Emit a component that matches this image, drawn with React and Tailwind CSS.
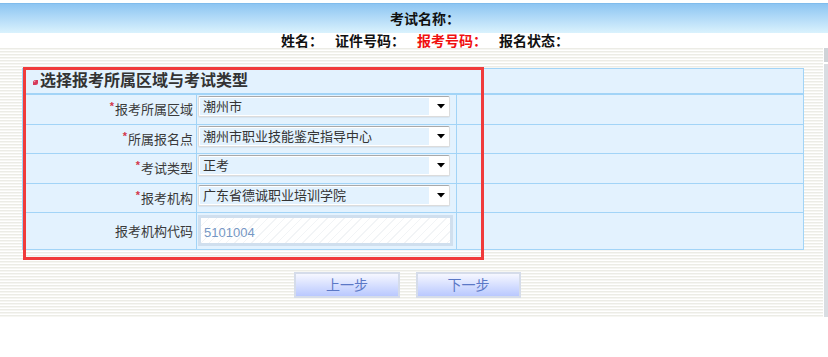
import React from 'react';

const rows = [
  { label: '报考所属区域', required: true, value: '潮州市', h: 'h-[30px]' },
  { label: '所属报名点', required: true, value: '潮州市职业技能鉴定指导中心', h: 'h-[29px]' },
  { label: '考试类型', required: true, value: '正考', h: 'h-[30px]' },
  { label: '报考机构', required: true, value: '广东省德诚职业培训学院', h: 'h-[29px]' },
];

function Select({ value }) {
  return (
    <div className="ml-[1px] mt-[1px] flex h-[21px] w-[252px] items-center rounded-[2px] border border-[#dcdcdc] border-t-[#a9a9a9] bg-white shadow-[0_1px_1px_rgba(0,0,0,0.06)]">
      <div className="ml-[1px] flex h-[17px] w-[229px] items-center bg-[#e3f2fe] pl-[3px] text-[13px] leading-none text-[#333]">
        {value}
      </div>
      <svg width="8" height="5" viewBox="0 0 8 5" className="ml-[8px]">
        <polygon points="0,0 8,0 4,4.5" fill="#000" />
      </svg>
    </div>
  );
}

function Label({ text, required }) {
  return (
    <div className="flex h-full w-[174px] items-center justify-end border-r border-[#a2d4f7] pr-[3px] text-[13px] leading-none text-[#3a3a3a]">
      {required && <span className="mr-[1px] -mt-[6px] text-[11px] font-bold text-[#d2384a]">*</span>}
      {text}
    </div>
  );
}

export default function App() {
  return (
    <div className="relative h-[357px] w-[828px] overflow-hidden bg-white font-['Liberation_Sans','Noto_Sans_CJK_SC',sans-serif]">
      <div className="mt-[3px] flex h-[30px] items-center justify-center border-t border-[#80bcec] bg-gradient-to-b from-[#8dc5f2] to-[#daf2fd] pl-[22px] text-[14px] font-bold leading-none text-[#111]">
        考试名称：
      </div>
      <div className="flex h-[15px] items-center justify-center gap-[12px] pl-[22px] text-[14px] font-bold leading-none text-[#111]">
        <span>姓名：</span>
        <span>证件号码：</span>
        <span className="text-[#f01010]">报考号码：</span>
        <span>报名状态：</span>
      </div>

      <div className="flex">
        <div className="w-[823px] bg-[repeating-linear-gradient(to_bottom,#ecece6_0px,#ecece6_1px,#f6f6f2_1px,#f6f6f2_2px,#ffffff_2px,#ffffff_3px)] pb-[19px] pl-[22px] pt-[20px]">
          <div className="w-[782px] border border-[#a2d4f7] bg-[#e3f2fe]">
            <div className="flex h-[26px] items-center border-b-2 border-[#a2d4f7] pl-[9px]">
              <svg width="7" height="7" viewBox="0 0 7 7" className="mt-[3px]">
                <path d="M1 6 L1 3.5 Q1 1 3.5 1 L6 1 L6 3.5 Q6 6 3.5 6 Z" fill="#d63a5a" />
                <path d="M2 3 L3.5 2" stroke="#f7b0c0" strokeWidth="1" />
              </svg>
              <span className="ml-[1px] text-[16px] font-bold leading-none text-[#333]">选择报考所属区域与考试类型</span>
            </div>
            {rows.map((r) => (
              <div key={r.label} className={`flex ${r.h} border-b border-[#a2d4f7]`}>
                <Label text={r.label} required={r.required} />
                <div className="h-full w-[260px] border-r border-[#a2d4f7]">
                  <Select value={r.value} />
                </div>
                <div className="flex-1" />
              </div>
            ))}
            <div className="flex h-[36px]">
              <Label text="报考机构代码" />
              <div className="h-full w-[260px] border-r border-[#a2d4f7] pt-[2px]">
                <div className="ml-[1px] h-[31px] w-[255px] border-[3px] border-[#d0dfee] bg-[repeating-linear-gradient(135deg,#ffffff_0px,#ffffff_5px,#f2f4f6_5px,#f2f4f6_6px)]">
                  <div className="flex h-full items-center pl-[3px] pt-[3px] text-[13px] leading-none text-[#7697c4]">5101004</div>
                </div>
              </div>
              <div className="flex-1" />
            </div>
          </div>

          <div className="mt-[22px] flex gap-[16px] pl-[272px]">
            <button className="h-[26px] w-[106px] border-2 border-[#d5dcea] bg-gradient-to-b from-[#f6f7ff] to-[#b9c8ff] text-[14px] leading-none text-[#5b78c6]">
              上一步
            </button>
            <button className="h-[26px] w-[105px] border-2 border-[#d5dcea] bg-gradient-to-b from-[#f6f7ff] to-[#b9c8ff] text-[14px] leading-none text-[#5b78c6]">
              下一步
            </button>
          </div>
        </div>
        <div className="ml-[1px] flex w-[4px] flex-col">
          <div className="h-[14px] bg-[#cfd3d8]" />
          <div className="mt-[2px] flex-1 bg-[#d9dde2]" />
        </div>
      </div>

      <div className="pointer-events-none absolute left-[23px] top-[67px] h-[193px] w-[461px] border-[3px] border-[#f03b3b]" />
    </div>
  );
}
